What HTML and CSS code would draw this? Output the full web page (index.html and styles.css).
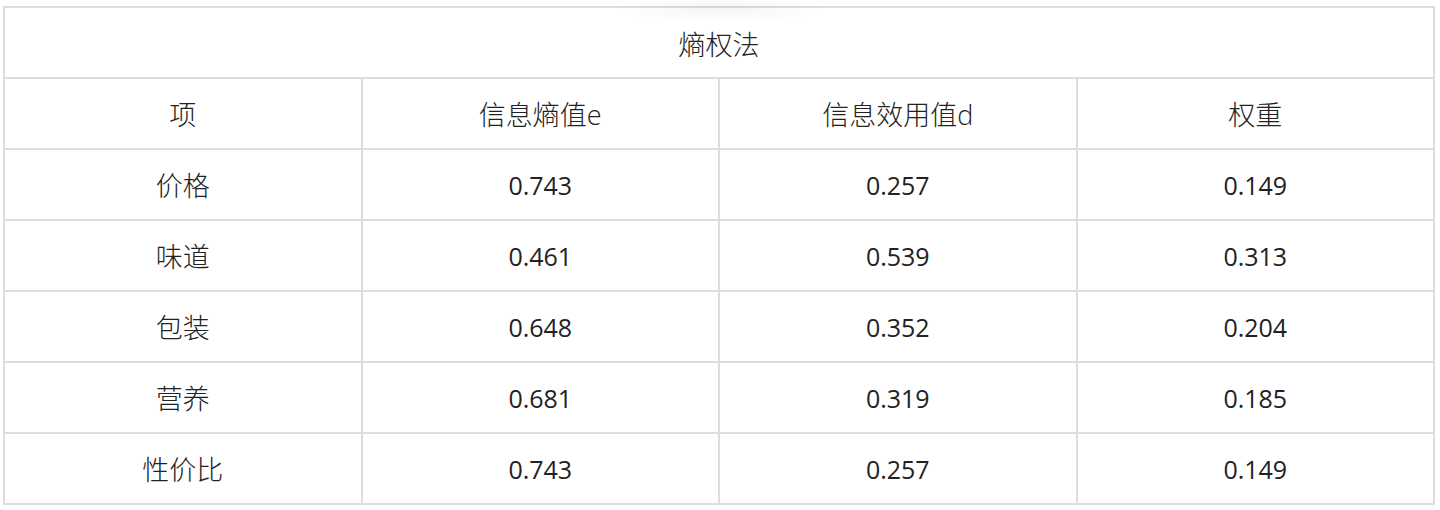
FILE: index.html
```html
<!DOCTYPE html>
<html lang="zh-CN">
<head>
<meta charset="utf-8">
<title>熵权法</title>
<link rel="stylesheet" href="styles.css">
</head>
<body>
<div class="wrap">
  <div class="glow"></div>
  <table class="grid">
    <thead>
      <tr><th class="title cjk" colspan="4">熵权法</th></tr>
      <tr><th class="cjk">项</th><th class="cjk">信息熵值e</th><th class="cjk">信息效用值d</th><th class="cjk">权重</th></tr>
    </thead>
    <tbody>
      <tr><td class="cjk">价格</td><td>0.743</td><td>0.257</td><td>0.149</td></tr>
      <tr><td class="cjk">味道</td><td>0.461</td><td>0.539</td><td>0.313</td></tr>
      <tr><td class="cjk">包装</td><td>0.648</td><td>0.352</td><td>0.204</td></tr>
      <tr><td class="cjk">营养</td><td>0.681</td><td>0.319</td><td>0.185</td></tr>
      <tr><td class="cjk">性价比</td><td>0.743</td><td>0.257</td><td>0.149</td></tr>
    </tbody>
  </table>
</div>
</body>
</html>
```
FILE: styles.css
```css
html, body {
  margin: 0;
  padding: 0;
  background: #ffffff;
}
.wrap {
  position: relative;
  padding: 6px 5px 0 3px;
}
.glow {
  position: absolute;
  left: 610px;
  top: 0;
  width: 220px;
  height: 40px;
  background: radial-gradient(ellipse 50% 35% at 50% 22%, rgba(0,0,0,0.04), rgba(0,0,0,0));
  pointer-events: none;
}
.grid {
  width: 100%;
  border-collapse: collapse;
  table-layout: fixed;
  font-family: "Open Sans", "Noto Sans CJK SC", sans-serif;
  font-size: 25px;
  color: #222222;
}
.grid th,
.grid td {
  border: 2px solid #dddddd;
  height: 69px;
  padding: 0;
  text-align: center;
  vertical-align: middle;
  font-weight: normal;
}
.grid .cjk {
  font-size: 27px;
  font-weight: 300;
}
.grid .title {
  padding-top: 2px;
  height: 67px;
}
```
